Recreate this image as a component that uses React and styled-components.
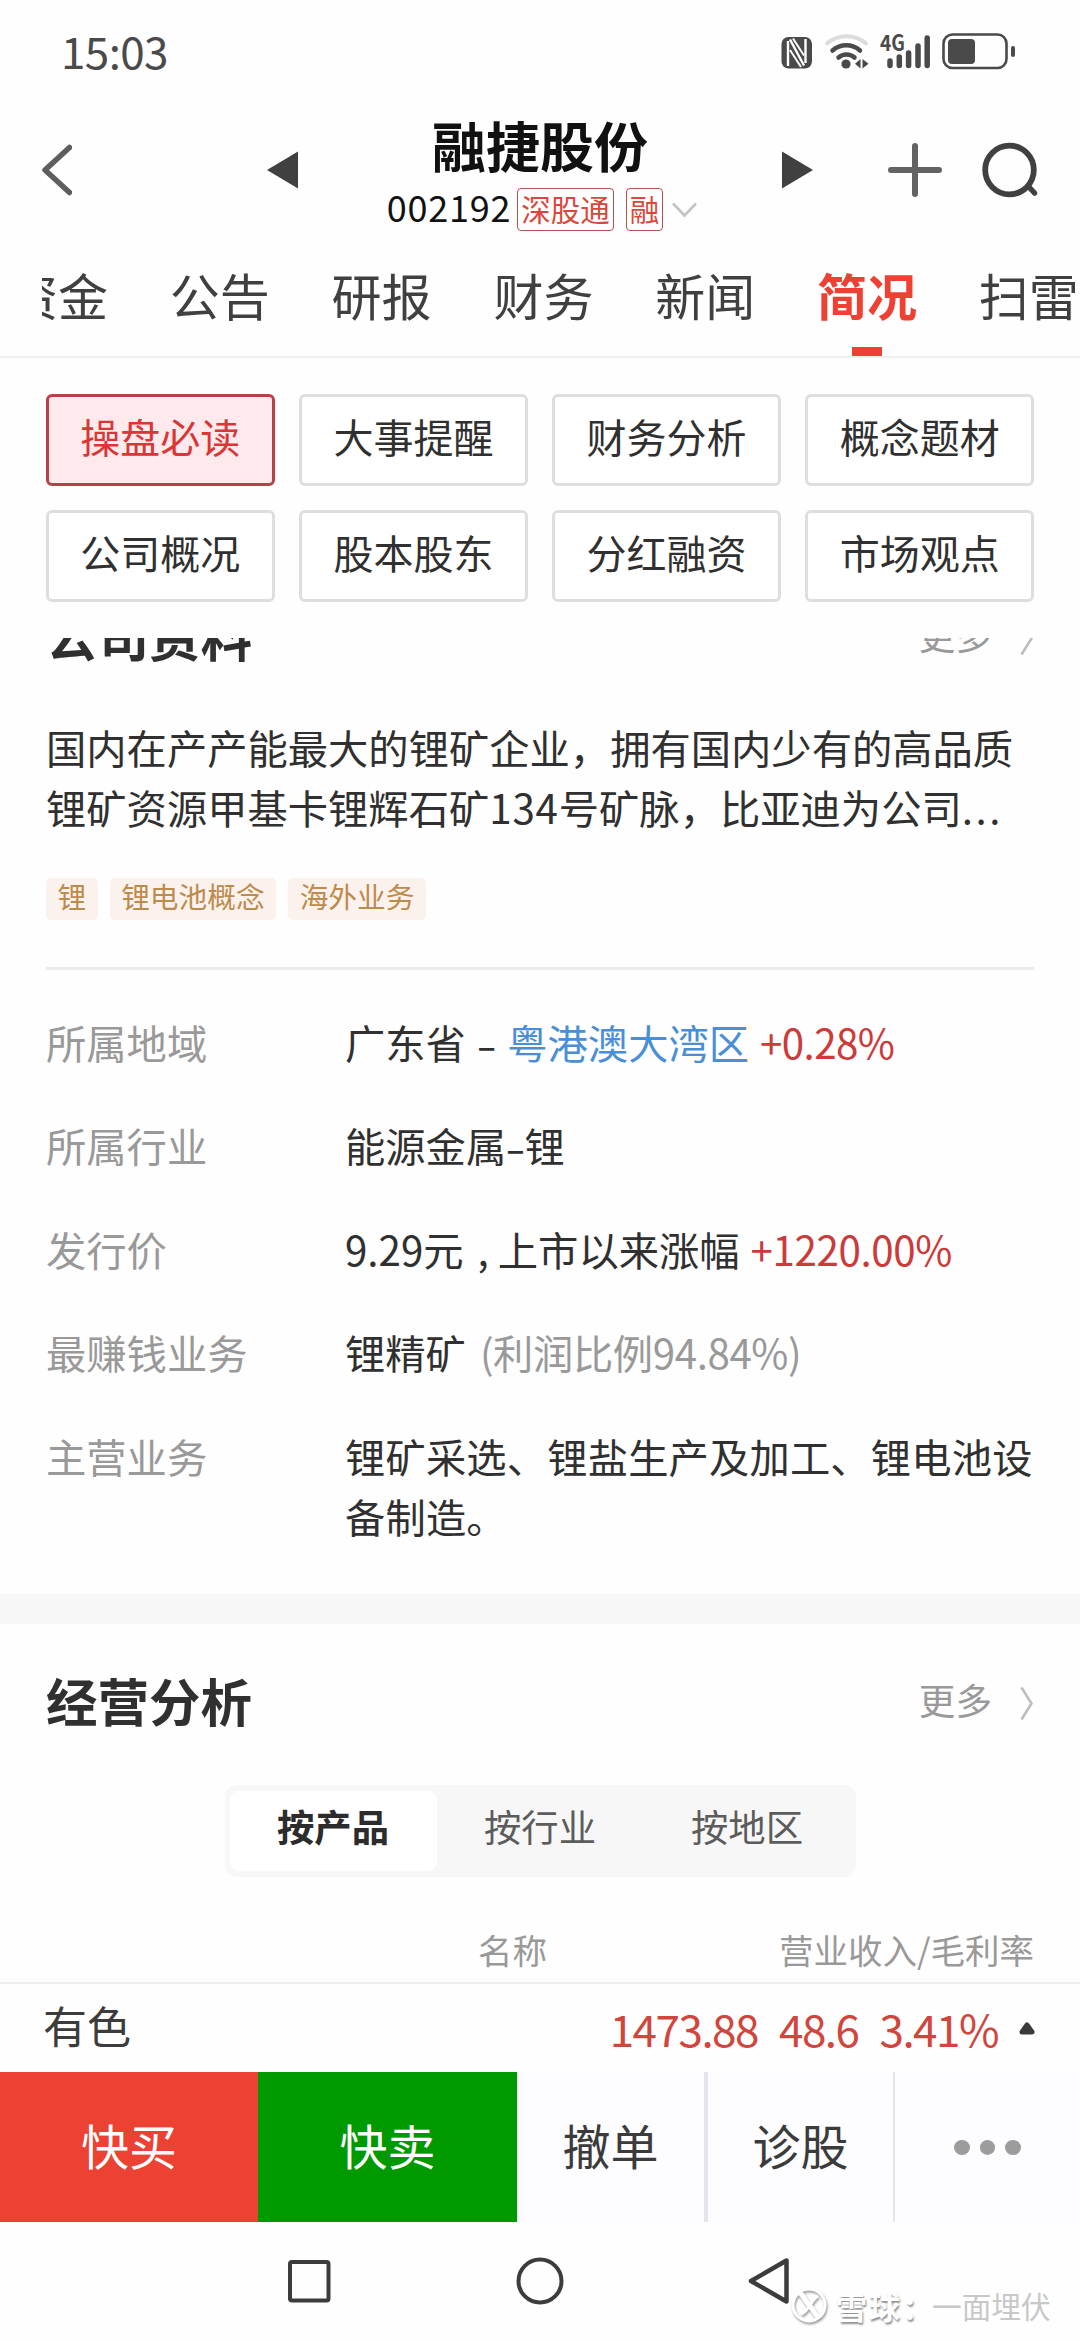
import React from "react";
import styled, { createGlobalStyle } from "styled-components";

const GlobalStyle = createGlobalStyle`
  * {
    box-sizing: border-box;
  }
  body {
    margin: 0;
    background: #fefefe;
    font-family: "Noto Sans CJK SC", "Noto Sans", sans-serif;
    color: #303030;
  }
`;

const Screen = styled.div`
  display: flex;
  flex-direction: column;
  width: 1080px;
  height: 2340px;
  overflow: hidden;
  white-space: nowrap;
`;

const StatusBar = styled.div`
  flex: none;
  display: flex;
  align-items: center;
  justify-content: space-between;
  height: 100px;
  padding: 0 64px 0 61px;
  svg {
    margin-top: 6px;
    overflow: visible;
  }
`;

const Clock = styled.div`
  font-size: 44px;
  line-height: 60px;
  letter-spacing: -0.6px;
  color: #4a4a4a;
`;

const Header = styled.header`
  flex: none;
  display: flex;
  align-items: center;
  height: 140px;
  padding-left: 42px;
  svg {
    flex: none;
  }
  .prev {
    margin-left: 195px;
  }
  .add {
    margin-left: 75px;
  }
  .search {
    margin-left: 40px;
  }
`;

const Stock = styled.div`
  flex: none;
  align-self: flex-start;
  display: flex;
  flex-direction: column;
  align-items: center;
  width: 484px;
  padding-top: 12px;
`;

const StockName = styled.div`
  font-size: 54px;
  font-weight: 700;
  line-height: 66px;
  color: #111;
`;

const StockMeta = styled.div`
  display: flex;
  align-items: center;
  height: 63px;
  padding-left: 4px;
  svg {
    margin-left: 9px;
  }
`;

const Code = styled.span`
  padding-bottom: 8px;
  font-size: 36px;
  line-height: 50px;
  letter-spacing: 0.8px;
  color: #111;
`;

const Badge = styled.span`
  height: 43px;
  margin-left: ${(p) => p.$gap}px;
  padding: 0 3px;
  border: 1px solid #b5524b;
  border-radius: 4px;
  font-size: 29.5px;
  line-height: 38px;
  color: #d8483d;
`;

const Tabs = styled.nav`
  flex: none;
  height: 118px;
  padding-left: 42px;
  border-bottom: 2px solid #efefef;
`;

const TabTrack = styled.div`
  display: flex;
  gap: 61.8px;
  height: 116px;
  overflow: hidden;
`;

const Tab = styled.div`
  position: relative;
  flex: none;
  width: 100px;
  height: 116px;
  font-size: 50px;
  line-height: 108px;
  color: ${(p) => (p.$active ? "#ee4033" : "#404040")};
  font-weight: ${(p) => (p.$active ? 700 : 400)};
  &:first-child {
    margin-left: -34px;
  }
  &::after {
    content: "";
    display: ${(p) => (p.$active ? "block" : "none")};
    position: absolute;
    left: 35px;
    bottom: 0;
    width: 30px;
    height: 9px;
    background: #ee4033;
  }
`;

const Chips = styled.div`
  flex: none;
  display: grid;
  grid-template-columns: repeat(4, 1fr);
  grid-auto-rows: 92px;
  gap: 24px 24.5px;
  height: 280px;
  padding: 36px 46px 0;
`;

const Chip = styled.div`
  display: flex;
  align-items: center;
  justify-content: center;
  padding-bottom: 9px;
  border: 3px solid ${(p) => (p.$active ? "#b64146" : "#dedede")};
  border-radius: 6px;
  background: ${(p) => (p.$active ? "#fee9ed" : "#fff")};
  color: ${(p) => (p.$active ? "#d93636" : "#303030")};
  font-size: 40px;
  line-height: 60px;
`;

const Content = styled.main`
  flex: none;
  height: 1434px;
  overflow: hidden;
`;

const Section = styled.section`
  padding: 0 46px;
`;

const SectionHead = styled.div`
  display: flex;
  align-items: center;
  justify-content: space-between;
  height: 60px;
  margin-top: ${(p) => p.$top}px;
`;

const SectionTitle = styled.h2`
  margin: 0;
  font-size: 51.5px;
  font-weight: 700;
  line-height: 60px;
`;

const More = styled.div`
  display: flex;
  align-items: center;
  gap: 28px;
  font-size: 36.6px;
  line-height: 60px;
  color: #999;
  svg {
    margin-top: 7px;
  }
`;

const Summary = styled.div`
  margin-top: 52px;
  font-size: 40.3px;
  line-height: 60px;
`;

const Tags = styled.div`
  display: flex;
  gap: 12px;
  margin-top: 41px;
`;

const Tag = styled.span`
  height: 42px;
  padding: 0 11.5px;
  border-radius: 5px;
  background: #fcf2ed;
  color: #bd8b4c;
  font-size: 28.7px;
  line-height: 35px;
`;

const Divider = styled.div`
  height: 3px;
  margin-top: 47px;
  background: #ebebeb;
`;

const Facts = styled.div`
  display: grid;
  grid-template-columns: 299px 1fr;
  row-gap: 43.4px;
  margin-top: 42px;
  font-size: 40.3px;
  line-height: 60px;
`;

const Label = styled.div`
  color: #999;
`;

const Value = styled.div`
  white-space: pre-line;
`;

const Part = styled.span`
  margin-left: ${(p) => p.$gap || 0}px;
  color: ${(p) => p.color};
  letter-spacing: ${(p) => p.$spacing || 0}px;
`;

const Dash = styled.span`
  margin: 0 ${(p) => p.$gap || 0}px;
  font-size: 34px;
  font-weight: 500;
  line-height: 1;
`;

const Band = styled.div`
  height: 30px;
  margin-top: 48px;
  background: #f7f7f7;
`;

const Segments = styled.div`
  display: flex;
  width: 631px;
  height: 92px;
  margin: 55px auto 0;
  padding: 6px 5px;
  border-radius: 12px;
  background: #f7f7f7;
`;

const Segment = styled.div`
  flex: 1;
  border-radius: 9px;
  background: ${(p) => (p.$active ? "#fff" : "none")};
  color: ${(p) => (p.$active ? "#2c2c2c" : "#5c5c5c")};
  font-size: 37.4px;
  font-weight: ${(p) => (p.$active ? 700 : 400)};
  line-height: 70px;
  text-align: center;
`;

const TableHead = styled.div`
  display: flex;
  justify-content: space-between;
  height: 69px;
  margin-top: 38px;
  padding: 0 46px 0 478px;
  border-bottom: 2px solid #ededed;
  color: #999;
  font-size: 34.5px;
  line-height: 69px;
`;

const Ticker = styled.div`
  display: flex;
  align-items: center;
  height: 88px;
  padding: 0 45px 0 43px;
  line-height: 60px;
  svg {
    margin-left: 21px;
  }
`;

const TickerName = styled.div`
  padding-bottom: 5px;
  color: #3c3c3c;
  font-size: 44px;
`;

const Quote = styled.div`
  display: flex;
  gap: 21px;
  margin-left: auto;
  color: #d0463d;
  font-size: 44px;
  letter-spacing: -1.5px;
`;

const Actions = styled.div`
  flex: none;
  display: flex;
  height: 150px;
`;

const Action = styled.div`
  display: flex;
  align-items: center;
  justify-content: center;
  width: ${(p) => p.$w}px;
  padding-bottom: 6px;
  background: ${(p) => p.$bg || "#fdfcfe"};
  color: ${(p) => (p.$bg ? "#fff" : "#3b3b3b")};
  border-right: ${(p) => p.$line || 0}px solid #e4e4ec;
  font-size: 48px;
`;

const Dots = styled.div`
  display: flex;
  gap: 10px;
  padding-top: 6px;
  i {
    width: 15.5px;
    height: 15px;
    border-radius: 50%;
    background: #9c9c9c;
  }
`;

const SystemNav = styled.div`
  position: relative;
  flex: none;
  display: flex;
  justify-content: center;
  gap: 183px;
  height: 118px;
  padding-top: 34px;
`;

const Watermark = styled.div`
  position: absolute;
  left: 791px;
  top: 62px;
  display: flex;
  align-items: center;
  height: 44px;
  color: #fff;
  font-size: 31px;
  line-height: 44px;
  text-shadow: 1px 2px 2px #8d8d8d;
  svg {
    margin-right: 7px;
    filter: drop-shadow(1px 2px 1px #999);
  }
  b {
    font-weight: 700;
    letter-spacing: 2px;
    margin-right: -3px;
  }
  span {
    color: #c8c8c8;
    font-size: 29.7px;
    text-shadow: none;
  }
`;

const StatusIcons = () => (
  <svg width="236" height="42" viewBox="780 32 236 42" fill="#4a4a4a">
    <rect x="781.5" y="37" width="30.5" height="31.5" rx="7" />
    <path
      d="M788 66V41M805.500 39v24M790 39.500l14 26"
      fill="none"
      stroke="#fff"
      strokeWidth="2.400"
    />
    <path d="M793 38.500l11 17M790 50l11 17" stroke="#fff" strokeWidth="2" />
    <g fill="none" strokeLinecap="round" strokeWidth="4.500">
      <path d="M827 43.500a30 30 0 0 1 39 0" stroke="#dcdcdc" strokeWidth="4" />
      <path d="M832.500 50.500a21 21 0 0 1 27.500 0" stroke="#4a4a4a" />
      <path d="M838.500 57.500a12 12 0 0 1 16 0" stroke="#4a4a4a" />
    </g>
    <circle cx="846" cy="64" r="4.600" />
    <path d="M860.500 59v9.500l-5.500-4.700zM862.500 59v9.500l6-4.700z" />
    <text
      x="880"
      y="51"
      fontSize="22"
      fontWeight="700"
      textLength="25"
      lengthAdjust="spacingAndGlyphs"
    >
      4G
    </text>
    <g stroke="#4a4a4a" strokeWidth="5.500" strokeLinecap="round">
      <path d="M890 61v4.500M899.300 57v8.500M908.600 53v12.500M918 46v19.500M927.200 38v27.500" />
    </g>
    <rect
      x="943.500"
      y="34.500"
      width="63"
      height="33.500"
      rx="9"
      fill="none"
      stroke="#4a4a4a"
      strokeWidth="2.600"
    />
    <rect x="948" y="39" width="27" height="25" rx="4" />
    <rect x="1011" y="46" width="4" height="11" rx="2" />
  </svg>
);

const Chevron = () => (
  <svg width="14" height="35" viewBox="0 0 14 35" fill="none">
    <path d="M1.500 1.500l10 16-10 16" stroke="#bdbdbd" strokeWidth="2.600" />
  </svg>
);

const tabs = ["资金", "公告", "研报", "财务", "新闻", "简况", "扫雷"];

const chips = [
  "操盘必读",
  "大事提醒",
  "财务分析",
  "概念题材",
  "公司概况",
  "股本股东",
  "分红融资",
  "市场观点",
];

const App = () => {
  return (
    <Screen>
      <GlobalStyle />
      <StatusBar>
        <Clock>15:03</Clock>
        <StatusIcons />
      </StatusBar>

      <Header>
        <svg width="30" height="52" viewBox="0 0 30 52" fill="none">
          <path
            d="M27.500 3.500L3 26l24.500 22.500"
            stroke="#5e5e5e"
            strokeWidth="5.500"
            strokeLinecap="round"
            strokeLinejoin="round"
          />
        </svg>
        <svg className="prev" width="31" height="38" viewBox="0 0 31 38">
          <path d="M31 0.500v37L0 19z" fill="#404040" />
        </svg>
        <Stock>
          <StockName>融捷股份</StockName>
          <StockMeta>
            <Code>002192</Code>
            <Badge $gap={6}>深股通</Badge>
            <Badge $gap={12}>融</Badge>
            <svg width="25" height="16" viewBox="0 0 25 16" fill="none">
              <path d="M1 1.500l11.500 12L24 1.500" stroke="#c4c4c4" strokeWidth="2.600" />
            </svg>
          </StockMeta>
        </Stock>
        <svg width="31" height="38" viewBox="0 0 31 38">
          <path d="M0 0.500v37L31 19z" fill="#404040" />
        </svg>
        <svg className="add" width="54" height="56" viewBox="0 0 54 56">
          <path
            d="M27 4v48M3 28h48"
            stroke="#636363"
            strokeWidth="6"
            strokeLinecap="round"
          />
        </svg>
        <svg className="search" width="56" height="56" viewBox="0 0 56 56" fill="none">
          <circle cx="27.500" cy="28" r="24.300" stroke="#404040" strokeWidth="5.800" />
          <path d="M46 44l6.500 7" stroke="#404040" strokeWidth="5.500" strokeLinecap="round" />
        </svg>
      </Header>

      <Tabs>
        <TabTrack>
          {tabs.map((t) => (
            <Tab key={t} $active={t === "简况"}>
              {t}
            </Tab>
          ))}
        </TabTrack>
      </Tabs>

      <Chips>
        {chips.map((c, i) => (
          <Chip key={c} $active={i === 0}>
            {c}
          </Chip>
        ))}
      </Chips>

      <Content>
        <Section>
          <SectionHead $top={-33}>
            <SectionTitle>公司资料</SectionTitle>
            <More>
              更多 <Chevron />
            </More>
          </SectionHead>
          <Summary>
            国内在产产能最大的锂矿企业，拥有国内少有的高品质
            <br />
            锂矿资源甲基卡锂辉石矿<Part $spacing={0.8}>134</Part>
            号矿脉，比亚迪为公司<Part $spacing={2.5}>...</Part>
          </Summary>
          <Tags>
            <Tag>锂</Tag>
            <Tag>锂电池概念</Tag>
            <Tag>海外业务</Tag>
          </Tags>
          <Divider />
          <Facts>
            <Label>所属地域</Label>
            <Value>
              广东省
              <Dash $gap={11.5}>–</Dash>
              <Part color="#4a8fd6">粤港澳大湾区</Part>
              <Part $gap={11} $spacing={-0.6} color="#cc3a3a">
                +0.28%
              </Part>
            </Value>
            <Label>所属行业</Label>
            <Value>
              能源金属<Dash>–</Dash>锂
            </Value>
            <Label>发行价</Label>
            <Value>
              9.29元<Part $gap={14}>,</Part>
              <Part $gap={9}>上市以来涨幅</Part>
              <Part $gap={11} $spacing={-0.4} color="#cc3a3a">
                +1220.00%
              </Part>
            </Value>
            <Label>最赚钱业务</Label>
            <Value>
              锂精矿
              <Part $gap={14} $spacing={-0.4} color="#999">
                (利润比例94.84%)
              </Part>
            </Value>
            <Label>主营业务</Label>
            <Value>
              <Part $spacing={0.15}>
                {"锂矿采选、锂盐生产及加工、锂电池设\n备制造。"}
              </Part>
            </Value>
          </Facts>
        </Section>

        <Band />

        <Section>
          <SectionHead $top={46}>
            <SectionTitle>经营分析</SectionTitle>
            <More>
              更多 <Chevron />
            </More>
          </SectionHead>
          <Segments>
            <Segment $active>按产品</Segment>
            <Segment>按行业</Segment>
            <Segment>按地区</Segment>
          </Segments>
        </Section>
        <TableHead>
          <span>名称</span>
          <span>营业收入/毛利率</span>
        </TableHead>
        <Ticker>
          <TickerName>有色</TickerName>
          <Quote>
            <span>1473.88</span>
            <span>48.6</span>
            <span>3.41%</span>
          </Quote>
          <svg width="16" height="14" viewBox="0 0 16 14">
            <path
              d="M8 4l5 7H3z"
              fill="#3a3a3a"
              stroke="#3a3a3a"
              strokeWidth="5"
              strokeLinejoin="round"
            />
          </svg>
        </Ticker>
      </Content>

      <Actions>
        <Action $w={258} $bg="#ed4134">
          快买
        </Action>
        <Action $w={259} $bg="#009a00">
          快卖
        </Action>
        <Action $w={191} $line={4}>
          撤单
        </Action>
        <Action $w={187} $line={2}>
          诊股
        </Action>
        <Action $w={185}>
          <Dots>
            <i />
            <i />
            <i />
          </Dots>
        </Action>
      </Actions>

      <SystemNav>
        <svg width="48" height="50" viewBox="0 0 48 50" fill="none">
          <rect x="5" y="6" width="38.500" height="38.500" rx="2" stroke="#3c3c3c" strokeWidth="4" />
        </svg>
        <svg width="48" height="50" viewBox="0 0 48 50" fill="none">
          <circle cx="24" cy="25" r="21.500" stroke="#3c3c3c" strokeWidth="4" />
        </svg>
        <svg width="48" height="50" viewBox="0 0 48 50" fill="none">
          <path
            d="M39.500 4.500v41L4 25z"
            stroke="#3c3c3c"
            strokeWidth="4.500"
            strokeLinejoin="round"
          />
        </svg>
        <Watermark>
          <svg width="38" height="38" viewBox="0 0 38 38" fill="none" stroke="#fff">
            <circle cx="18" cy="18" r="16" strokeWidth="3" />
            <path d="M9 6c5 4 5 8 9 12s5 8 9 12" strokeWidth="5" />
            <path d="M27 9c-4 2-5 5-8 9s-4 7-9 9" strokeWidth="3" />
          </svg>
          <b>雪球：</b>
          <span>一面埋伏</span>
        </Watermark>
      </SystemNav>
    </Screen>
  );
};

export default App;
